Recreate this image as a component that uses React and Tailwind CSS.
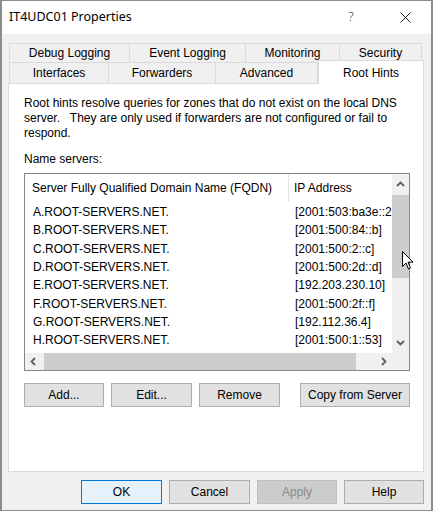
import React from 'react'

const FONT = { fontFamily: '"Liberation Sans", Arial, sans-serif' }

const ROW1 = [
  { label: 'Debug Logging', w: 'w-[121px]' },
  { label: 'Event Logging', w: 'w-[116px]' },
  { label: 'Monitoring', w: 'w-[94px]' },
  { label: 'Security', w: 'w-[82px]' },
]

const ROW2 = [
  { label: 'Interfaces', w: 'w-[100px]' },
  { label: 'Forwarders', w: 'w-[107px]' },
  { label: 'Advanced', w: 'w-[102px]' },
]

const SERVERS = [
  ['A.ROOT-SERVERS.NET.', '[2001:503:ba3e::2'],
  ['B.ROOT-SERVERS.NET.', '[2001:500:84::b]'],
  ['C.ROOT-SERVERS.NET.', '[2001:500:2::c]'],
  ['D.ROOT-SERVERS.NET.', '[2001:500:2d::d]'],
  ['E.ROOT-SERVERS.NET.', '[192.203.230.10]'],
  ['F.ROOT-SERVERS.NET.', '[2001:500:2f::f]'],
  ['G.ROOT-SERVERS.NET.', '[192.112.36.4]'],
  ['H.ROOT-SERVERS.NET.', '[2001:500:1::53]'],
]

function Chevron({ dir }) {
  const pts = {
    up: '1,6 4.5,2.5 8,6',
    down: '1,3 4.5,6.5 8,3',
    left: '6,1 2.5,4.5 6,8',
    right: '3,1 6.5,4.5 3,8',
  }[dir]
  return (
    <svg width="9" height="9" viewBox="0 0 9 9">
      <polyline points={pts} fill="none" stroke="#606060" strokeWidth="1.8" />
    </svg>
  )
}

function Btn({ children, className = '' }) {
  return (
    <div className={`h-[24px] flex items-center justify-center border text-[12px] ${className}`}>
      {children}
    </div>
  )
}

export default function App() {
  return (
    <div className="relative w-[433px] h-[511px] bg-[#f0f0f0] overflow-hidden text-black" style={FONT}>
      {/* Title bar */}
      <div className="h-[34px] bg-white flex items-center pl-[9px]">
        <span className="text-[12.5px] pt-[1px]" style={{ fontFamily: '"Noto Sans", "Open Sans", sans-serif' }}>
          IT4UDC01 Properties
        </span>
        <span className="ml-auto w-[14px] text-center text-[13px] text-[#333] font-light" style={{ fontFamily: '"Noto Sans", sans-serif' }}>?</span>
        <div className="w-[75px] flex justify-center pl-[20px]">
          <svg width="11" height="11" viewBox="0 0 11 11">
            <path d="M0.5 0.5 L10.5 10.5 M10.5 0.5 L0.5 10.5" stroke="#222" strokeWidth="1" />
          </svg>
        </div>
      </div>

      {/* Tabs */}
      <div className="pl-[9px] pt-[9px]">
        <div className="flex h-[19px]">
          {ROW1.map((t, i) => (
            <div
              key={t.label}
              className={`${t.w} flex items-center justify-center text-[12px] border-t border-r border-[#dadada] ${i === 0 ? 'border-l' : ''}`}
            >
              {t.label}
            </div>
          ))}
        </div>
        <div className="flex items-end h-[21px]">
          {ROW2.map((t, i) => (
            <div
              key={t.label}
              className={`${t.w} h-[21px] flex items-center justify-center text-[12px] border-t border-r border-[#dadada] ${i === 0 ? 'border-l' : ''}`}
            >
              {t.label}
            </div>
          ))}
          <div className="relative z-10 w-[106px] h-[24px] -mb-px bg-white border-x border-t border-[#dadada] flex justify-center pt-[3px] text-[12px]">
            Root Hints
          </div>
        </div>
      </div>

      {/* Panel */}
      <div className="ml-[8px] w-[416px] h-[389px] bg-white border border-[#dadada] pl-[15px] pt-[12px]">
        <p className="text-[12px] leading-[15px] whitespace-pre">
          {'Root hints resolve queries for zones that do not exist on the local DNS\nserver.   They are only used if forwarders are not configured or fail to\nrespond.'}
        </p>
        <p className="mt-[11px] text-[12px] leading-[15px]">Name servers:</p>

        {/* List box */}
        <div className="mt-[6px] w-[386px] h-[198px] border border-[#828790] flex flex-col">
          <div className="flex h-[179px]">
            <div className="flex-1 overflow-hidden text-[12px]">
              <div className="flex h-[28px] items-center">
                <div className="w-[264px] pl-[7px] shrink-0 h-full flex items-center border-r border-[#e5e5e5]">
                  Server Fully Qualified Domain Name (FQDN)
                </div>
                <div className="pl-[5px] whitespace-nowrap">IP Address</div>
              </div>
              <div className="pt-[1px]">
                {SERVERS.map(([name, ip]) => (
                  <div key={name} className="flex h-[18.3px] items-center whitespace-nowrap">
                    <div className="w-[264px] pl-[8px] shrink-0">{name}</div>
                    <div className="pl-[6px]">{ip}</div>
                  </div>
                ))}
              </div>
            </div>
            {/* Vertical scrollbar */}
            <div className="w-[17px] bg-[#f0f0f0] flex flex-col">
              <div className="h-[17px] flex items-center justify-center pt-[4px]">
                <Chevron dir="up" />
              </div>
              <div className="flex-1 pt-[4px]">
                <div className="h-[83px] bg-[#cdcdcd]" />
              </div>
              <div className="h-[17px] flex items-center justify-center pb-[4px]">
                <Chevron dir="down" />
              </div>
            </div>
          </div>
          {/* Horizontal scrollbar */}
          <div className="flex h-[17px]">
            <div className="flex-1 flex bg-[#f0f0f0]">
              <div className="w-[17px] flex items-center justify-center">
                <Chevron dir="left" />
              </div>
              <div className="flex-1 pl-[2px]">
                <div className="w-[312px] h-full bg-[#cdcdcd]" />
              </div>
              <div className="w-[17px] flex items-center justify-center">
                <Chevron dir="right" />
              </div>
            </div>
            <div className="w-[17px] bg-[#f0f0f0]" />
          </div>
        </div>

        {/* List buttons */}
        <div className="mt-[12px] flex w-[386px]">
          <Btn className="w-[80px] bg-[#e1e1e1] border-[#adadad]">Add...</Btn>
          <Btn className="w-[81px] ml-[7px] bg-[#e1e1e1] border-[#adadad]">Edit...</Btn>
          <Btn className="w-[81px] ml-[7px] bg-[#e1e1e1] border-[#adadad]">Remove</Btn>
          <Btn className="w-[110px] ml-auto bg-[#e1e1e1] border-[#adadad]">Copy from Server</Btn>
        </div>
      </div>

      {/* Dialog buttons */}
      <div className="mt-[8px] flex justify-end gap-[7px] pr-[9px]">
        <Btn className="w-[81px] bg-[#e5f1fb] border-[#0078d7]">OK</Btn>
        <Btn className="w-[81px] bg-[#e1e1e1] border-[#adadad]">Cancel</Btn>
        <Btn className="w-[80px] bg-[#cccccc] border-[#bfbfbf] text-[#8a8a8a]">Apply</Btn>
        <Btn className="w-[80px] bg-[#e1e1e1] border-[#adadad]">Help</Btn>
      </div>

      {/* Mouse cursor */}
      <svg className="absolute left-[402px] top-[251px]" width="12" height="19" viewBox="0 0 12 19">
        <path d="M0.5 0.5 L0.5 15.5 L4 12 L6.5 18 L8.5 17 L6 11.2 L11 11.2 Z" fill="white" stroke="black" strokeWidth="1" strokeLinejoin="round" />
      </svg>

      {/* Window frame */}
      <div className="pointer-events-none absolute inset-0 border-y border-x-2 border-[#8c8c8c]" />
    </div>
  )
}
